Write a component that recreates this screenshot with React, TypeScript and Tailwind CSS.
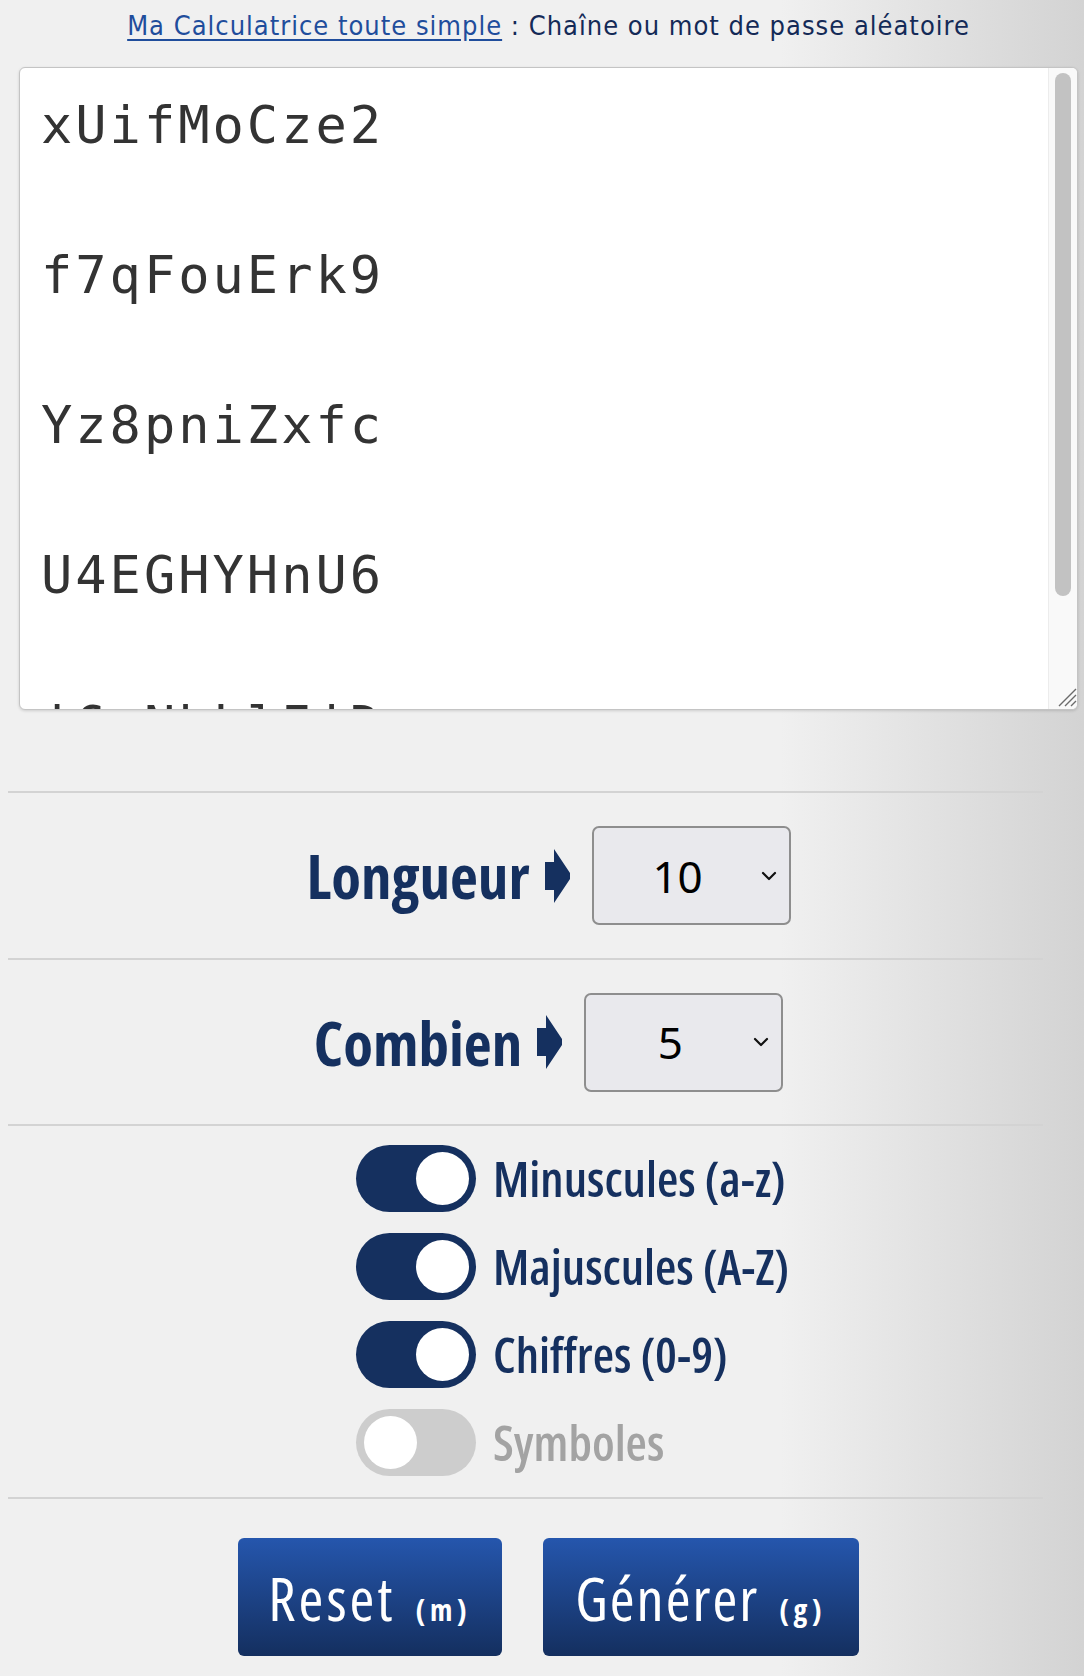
import { useState } from "react";

const passwords = [
  "xUifMoCze2",
  "f7qFouErk9",
  "Yz8pniZxfc",
  "U4EGHYHnU6",
  "i6xNhklIiD",
];

function Arrow() {
  return (
    <svg className="h-[54px] w-[25px] shrink-0" viewBox="0 0 25 54" fill="#15305f">
      <polygon points="0,13 9,13 9,0 25,24 25,30 9,54 9,41 0,41" />
    </svg>
  );
}

function NumberSelect({
  value,
  options,
  onChange,
}: {
  value: number;
  options: number[];
  onChange: (v: number) => void;
}) {
  return (
    <div className="relative shrink-0">
      <select
        value={value}
        onChange={(e) => onChange(Number(e.target.value))}
        className="h-[99px] w-[199px] appearance-none rounded-[7px] border-2 border-[#8e8e8e] bg-[#e9e9ed] pl-2 pr-[35px] font-['Noto_Sans',sans-serif] text-[44px] text-black outline-none [text-align-last:center]"
      >
        {options.map((o) => (
          <option key={o} value={o}>
            {o}
          </option>
        ))}
      </select>
      <svg
        className="pointer-events-none absolute right-[14px] top-1/2 h-[10px] w-[16px] -translate-y-1/2"
        viewBox="0 0 16 10"
        fill="none"
        stroke="#111"
        strokeWidth={2.2}
        strokeLinecap="round"
        strokeLinejoin="round"
      >
        <path d="M2 2l6 6 6-6" />
      </svg>
    </div>
  );
}

function Toggle({
  on,
  label,
  onClick,
}: {
  on: boolean;
  label: string;
  onClick: () => void;
}) {
  return (
    <div className="flex items-center gap-[17px]">
      <button
        type="button"
        role="switch"
        aria-checked={on}
        onClick={onClick}
        className={
          on
            ? "flex h-[67px] w-[120px] shrink-0 items-center justify-end rounded-full bg-[#15305f] p-[7px]"
            : "flex h-[67px] w-[120px] shrink-0 items-center justify-start rounded-full bg-[#cdcdcd] p-[8px]"
        }
      >
        <span className="block h-[53px] w-[53px] rounded-full bg-white" />
      </button>
      <span
        className={
          on
            ? "font-['Open_Sans',sans-serif] text-[49px] font-semibold leading-none text-[#15305f] [font-stretch:75%]"
            : "font-['Open_Sans',sans-serif] text-[49px] font-semibold leading-none text-[#a3a3a3] [font-stretch:75%]"
        }
      >
        {label}
      </span>
    </div>
  );
}

function Rule() {
  return <div className="ml-[8px] mr-[41px] h-[2px] bg-[#d3d3d3]" />;
}

export default function App() {
  const [length, setLength] = useState(10);
  const [count, setCount] = useState(5);
  const [flags, setFlags] = useState({
    lower: true,
    upper: true,
    digits: true,
    symbols: false,
  });

  const toggle = (k: keyof typeof flags) =>
    setFlags((prev) => ({ ...prev, [k]: !prev[k] }));

  return (
    <div className="min-h-screen bg-[linear-gradient(to_right,#f0f0f0_72%,#d3d3d3_100%)]">
      <div className="pl-[19px] pr-[6px] pt-[10px]">
        <h1 className="h-[32px] text-center font-['DejaVu_Sans_Condensed',sans-serif] text-[27px] font-normal leading-[32px] tracking-[1px] text-[#142a57] [font-stretch:semi-condensed]">
          <a href="#" className="text-[#1f4d9c] underline underline-offset-[4px]">
            Ma Calculatrice toute simple
          </a>{" "}
          : Chaîne ou mot de passe aléatoire
        </h1>

        <div className="relative mt-[25px]">
          <textarea
            readOnly
            value={passwords.join("\n\n")}
            className="block h-[643px] w-full resize-none overflow-hidden rounded-[6px] border border-[#c4c4c4] bg-white pl-[21px] pr-10 pt-[20px] font-['DejaVu_Sans_Mono',monospace] text-[52px] leading-[75px] tracking-[3px] text-[#333] shadow-[0_1px_3px_rgba(0,0,0,0.15)] outline-none"
          />
          {/* scrollbar + resize grip */}
          <div
            aria-hidden
            className="pointer-events-none absolute bottom-[1px] right-[1px] top-[1px] flex w-[29px] flex-col rounded-r-[5px] border-l border-[#ececec] bg-[#f9f9f9] px-[6px] pt-[5px]"
          >
            <div className="h-[523px] w-full rounded-full bg-[#c2c2c2]" />
            <svg className="mt-auto mb-[2px] ml-auto mr-[-5px] h-[22px] w-[22px]" viewBox="0 0 22 22" stroke="#6b6b6b" strokeWidth={1.4}>
              <path d="M21 4L4 21M21 10L10 21M21 16L16 21" />
            </svg>
          </div>
        </div>
      </div>

      <div className="h-[81px]" />
      <Rule />

      <div className="flex h-[165px] items-center justify-center pl-[19px] pr-[6px]">
        <span className="font-['Open_Sans',sans-serif] text-[61px] font-bold leading-none text-[#15305f] [font-stretch:75%]">
          Longueur
        </span>
        <span className="ml-[15px] mr-[22px]">
          <Arrow />
        </span>
        <NumberSelect
          value={length}
          options={[6, 8, 10, 12, 14, 16, 20, 24, 32]}
          onChange={setLength}
        />
      </div>
      <Rule />

      <div className="flex h-[164px] items-center justify-center pl-[19px] pr-[6px]">
        <span className="font-['Open_Sans',sans-serif] text-[61px] font-bold leading-none text-[#15305f] [font-stretch:75%]">
          Combien
        </span>
        <span className="ml-[15px] mr-[22px]">
          <Arrow />
        </span>
        <NumberSelect
          value={count}
          options={[1, 2, 3, 4, 5, 10, 20]}
          onChange={setCount}
        />
      </div>
      <Rule />

      <div className="flex flex-col gap-[21px] pb-[21px] pl-[356px] pt-[19px]">
        <Toggle on={flags.lower} label="Minuscules (a-z)" onClick={() => toggle("lower")} />
        <Toggle on={flags.upper} label="Majuscules (A-Z)" onClick={() => toggle("upper")} />
        <Toggle on={flags.digits} label="Chiffres (0-9)" onClick={() => toggle("digits")} />
        <Toggle on={flags.symbols} label="Symboles" onClick={() => toggle("symbols")} />
      </div>
      <Rule />

      <div className="flex justify-center gap-[41px] pb-[19px] pl-[19px] pr-[6px] pt-[39px]">
        <button
          type="button"
          className="flex h-[118px] w-[264px] items-baseline justify-center rounded-[6px] bg-[linear-gradient(to_bottom,#2556ad,#142f5f)] pt-[30px] font-['Open_Sans',sans-serif] text-white [font-stretch:75%]"
        >
          <span className="text-[60px] leading-none tracking-[3px]">Reset</span>
          <span className="ml-[20px] text-[30px] font-bold leading-none tracking-[5px]">(m)</span>
        </button>
        <button
          type="button"
          className="flex h-[118px] w-[316px] items-baseline justify-center rounded-[6px] bg-[linear-gradient(to_bottom,#2556ad,#142f5f)] pt-[30px] font-['Open_Sans',sans-serif] text-white [font-stretch:75%]"
        >
          <span className="text-[60px] leading-none tracking-[2px]">Générer</span>
          <span className="ml-[20px] text-[30px] font-bold leading-none tracking-[5px]">(g)</span>
        </button>
      </div>
    </div>
  );
}
